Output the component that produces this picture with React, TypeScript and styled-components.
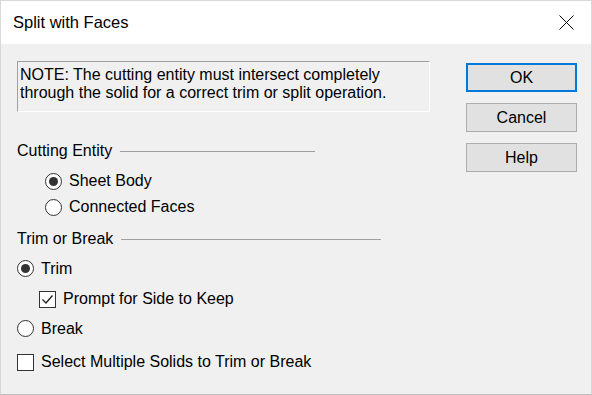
import React from 'react';
import styled, { createGlobalStyle } from 'styled-components';

const GlobalStyle = createGlobalStyle`
   html, body {
      margin: 0;
      padding: 0;
      background: #f0f0f0;
   }
   body {
      font-family: 'Liberation Sans', Arial, sans-serif;
      color: #000;
   }
`;

const Window = styled.div`
   width: 592px;
   height: 395px;
   box-sizing: border-box;
   border: 1px solid #d9d9d9;
   border-bottom-color: #bfbfbf;
   display: flex;
   flex-direction: column;
   background: #f0f0f0;
   overflow: hidden;
`;

const TitleBar = styled.div`
   height: 43px;
   flex: none;
   background: #fff;
   display: flex;
   align-items: center;
   justify-content: space-between;
   padding: 0 17px 0 12px;
`;

const Title = styled.span`
   font-size: 16.5px;
   margin-top: -1px;
`;

const Body = styled.div`
   flex: 1;
   display: flex;
   padding: 17px 14px 0 16px;
`;

const Content = styled.div`
   width: 413px;
   display: flex;
   flex-direction: column;
`;

const Note = styled.div`
   height: 51px;
   box-sizing: border-box;
   border: 1px solid;
   border-color: #a0a0a0 #fff #fff #a0a0a0;
   padding: 4px 0 0 2px;
   font-size: 16px;
   line-height: 18px;
`;

const Heading = styled.div<{ $width: number; $top: number }>`
   width: ${(p) => p.$width}px;
   margin-top: ${(p) => p.$top}px;
   height: 24px;
   display: flex;
   align-items: center;
   gap: 8px;
   font-size: 16px;

   &::after {
      content: '';
      flex: 1;
      height: 1px;
      background: #a0a0a0;
      margin-top: 1px;
   }
`;

const Option = styled.label<{ $indent: number; $height: number }>`
   height: ${(p) => p.$height}px;
   padding-left: ${(p) => p.$indent}px;
   display: flex;
   align-items: center;
   gap: 7px;
   font-size: 16px;
`;

const Radio = styled.span<{ $on?: boolean }>`
   width: 15px;
   height: 15px;
   border: 1px solid #333;
   border-radius: 50%;
   background: #fff;
   display: flex;
   align-items: center;
   justify-content: center;
   flex: none;

   &::after {
      content: '';
      display: ${(p) => (p.$on ? 'block' : 'none')};
      width: 9px;
      height: 9px;
      border-radius: 50%;
      background: #333;
   }
`;

const Check = styled.span`
   width: 15px;
   height: 15px;
   border: 1px solid #333;
   background: #fff;
   display: flex;
   align-items: center;
   justify-content: center;
   flex: none;
`;

const Buttons = styled.div`
   margin-left: auto;
   margin-top: 2px;
   display: flex;
   flex-direction: column;
   gap: 11px;
`;

const Button = styled.button<{ $default?: boolean }>`
   width: 111px;
   height: 29px;
   box-sizing: border-box;
   background: #e1e1e1;
   border: ${(p) => (p.$default ? '2px solid #0078d7' : '1px solid #adadad')};
   font-family: inherit;
   font-size: 16px;
   color: #000;
   padding: 0;
`;

const CloseIcon = () => (
   <svg width="15" height="15" viewBox="0 0 15 15">
      <path d="M0.5 0.5L14.5 14.5M14.5 0.5L0.5 14.5" stroke="#000" strokeWidth="1" />
   </svg>
);

const Tick = () => (
   <svg width="13" height="13" viewBox="0 0 13 13">
      <path d="M1.5 6.5L5 10L11.5 2.5" fill="none" stroke="#222" strokeWidth="1.4" />
   </svg>
);

const App: React.FC = () => (
   <>
      <GlobalStyle />
      <Window>
         <TitleBar>
            <Title>Split with Faces</Title>
            <CloseIcon />
         </TitleBar>
         <Body>
            <Content>
               <Note>
                  NOTE: The cutting entity must intersect completely
                  <br />
                  through the solid for a correct trim or split operation.
               </Note>
               <Heading $width={298} $top={27}>Cutting Entity</Heading>
               <Option $indent={28} $height={36}>
                  <Radio $on />
                  Sheet Body
               </Option>
               <Option $indent={28} $height={16}>
                  <Radio />
                  Connected Faces
               </Option>
               <Heading $width={364} $top={12}>Trim or Break</Heading>
               <Option $indent={0} $height={35}>
                  <Radio $on />
                  Trim
               </Option>
               <Option $indent={22} $height={26}>
                  <Check>
                     <Tick />
                  </Check>
                  Prompt for Side to Keep
               </Option>
               <Option $indent={0} $height={33}>
                  <Radio />
                  Break
               </Option>
               <Option $indent={0} $height={34}>
                  <Check />
                  Select Multiple Solids to Trim or Break
               </Option>
            </Content>
            <Buttons>
               <Button $default>OK</Button>
               <Button>Cancel</Button>
               <Button>Help</Button>
            </Buttons>
         </Body>
      </Window>
   </>
);

export default App;
